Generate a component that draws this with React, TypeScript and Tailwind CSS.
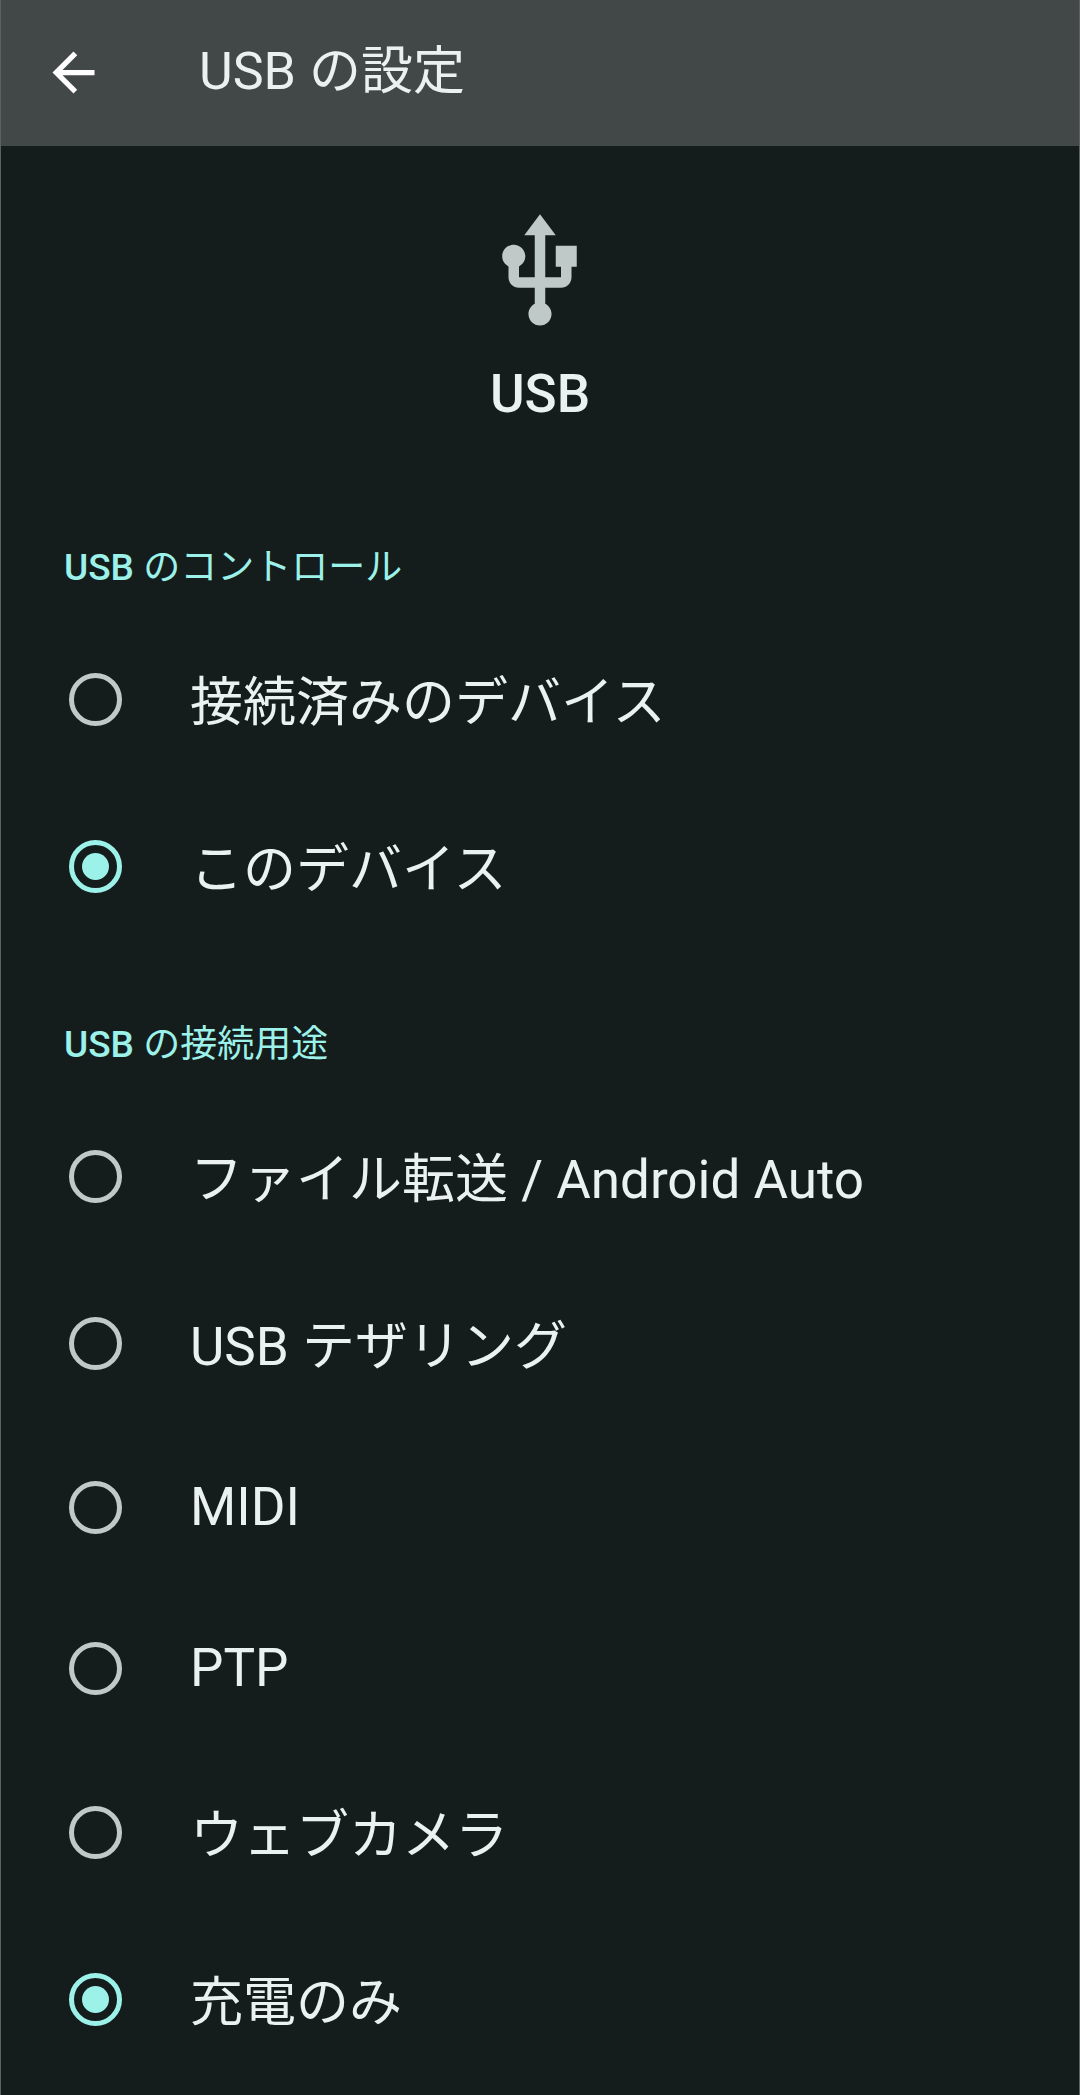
import { useState } from "react";
import clsx from "clsx";

const controlOptions = [
  { value: "host", label: "接続済みのデバイス" },
  { value: "device", label: "このデバイス" },
];

const functionOptions = [
  { value: "mtp", label: "ファイル転送 / Android Auto" },
  { value: "tether", label: "USB テザリング" },
  { value: "midi", label: "MIDI", latin: true },
  { value: "ptp", label: "PTP", latin: true },
  { value: "uvc", label: "ウェブカメラ" },
  { value: "charge", label: "充電のみ" },
];

type Option = { value: string; label: string; latin?: boolean };

function RadioGroup({
  title,
  name,
  options,
  initial,
}: {
  title: string;
  name: string;
  options: Option[];
  initial: string;
}) {
  const [value, setValue] = useState(initial);

  return (
    <section role="radiogroup" aria-labelledby={name + "-title"}>
      <h2
        id={name + "-title"}
        className="px-[63px] pt-[67px] pb-5 text-[37px] leading-[56px] font-medium text-[#9cf1e9]"
      >
        {title.split(" ")[0]} <span className="font-normal">{title.split(" ")[1]}</span>
      </h2>
      {options.map((o) => (
        <label key={o.value} className="flex items-center px-[68px] py-10 text-[53px]">
          <input
            type="radio"
            name={name}
            value={o.value}
            checked={value === o.value}
            onChange={() => setValue(o.value)}
            className="mr-[68px] grid size-[53px] shrink-0 appearance-none place-items-center rounded-full border-5 border-[#bfc9c7] checked:border-[#9cf1e9] checked:before:size-[27px] checked:before:rounded-full checked:before:bg-[#9cf1e9]"
          />
          {/* Japanese glyphs need a taller line than Latin ones */}
          <span className={clsx(o.latin ? "leading-[81px]" : "pt-2 leading-[79px]")}>
            {o.label}
          </span>
        </label>
      ))}
    </section>
  );
}

export default function App() {
  return (
    <div
      lang="ja"
      className="min-h-screen border-x border-[#5c6160] bg-[#141d1c] font-['Roboto','Noto_Sans_CJK_JP',sans-serif] text-[#ebf1f0]"
    >
      <header className="flex items-center bg-[#424847] px-[41px] pt-[31px] pb-[33px]">
        <button type="button" aria-label="戻る" className="mr-[94px] text-white">
          <svg viewBox="0 0 24 24" fill="currentColor" className="size-[63px]">
            <path d="M20 11H7.83l5.59-5.59L12 4l-8 8 8 8 1.41-1.41L7.83 13H20v-2z" />
          </svg>
        </button>
        <h1 className="text-[52px] leading-[82px]">USB の設定</h1>
      </header>

      <main>
        <div className="flex flex-col items-center pt-[63px] pb-10">
          <svg viewBox="0 0 24 24" fill="#bfc9c7" className="size-[126px]">
            <path d="M15 7v4h1v2h-3V5h2l-3-4-3 4h2v8H8v-2.07c.7-.37 1.2-1.08 1.2-1.93 0-1.21-.99-2.2-2.2-2.2-1.21 0-2.2.99-2.2 2.2 0 .85.5 1.56 1.2 1.93V13c0 1.11.89 2 2 2h3v3.05c-.71.37-1.2 1.1-1.2 1.95 0 1.22.99 2.2 2.2 2.2 1.21 0 2.2-.98 2.2-2.2 0-.85-.49-1.58-1.2-1.95V15h3c1.11 0 2-.89 2-2v-2h1V7h-4z" />
          </svg>
          <p className="mt-5 text-[53px] leading-[78px] font-medium">USB</p>
        </div>

        <RadioGroup
          title="USB のコントロール"
          name="usb-control"
          options={controlOptions}
          initial="device"
        />
        <RadioGroup
          title="USB の接続用途"
          name="usb-function"
          options={functionOptions}
          initial="charge"
        />
      </main>
    </div>
  );
}
